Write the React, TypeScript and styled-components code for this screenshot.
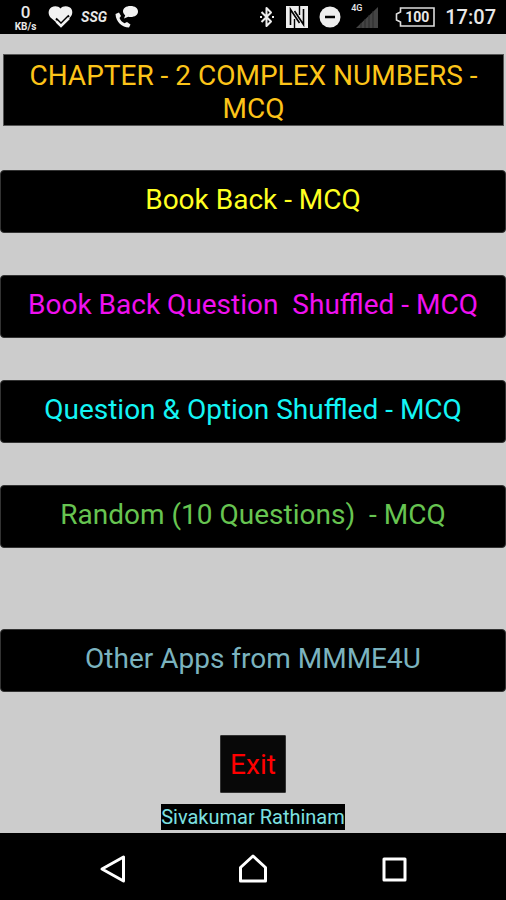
import React from "react";
import styled, { createGlobalStyle } from "styled-components";

const GlobalStyle = createGlobalStyle`
  *, *::before, *::after { box-sizing: border-box; }
  body {
    margin: 0;
    background: #cccccc;
    font-family: Roboto, "Liberation Sans", sans-serif;
  }
`;

const Screen = styled.div`
  display: flex;
  flex-direction: column;
  min-height: 100vh;
  background: #cccccc;
`;

const StatusBar = styled.header`
  display: flex;
  align-items: center;
  justify-content: space-between;
  height: 34px;
  padding: 0 10px 0 13px;
  background: #000;
  color: #e8e8e8;
`;

const StatusGroup = styled.div`
  display: flex;
  align-items: center;
  gap: 10px;

  svg { display: block; flex: none; }
`;

const Speed = styled.div`
  display: flex;
  flex-direction: column;
  align-items: center;
  width: 25px;
  font-weight: 500;
`;

const SpeedValue = styled.span`
  font-size: 17px;
  line-height: 20px;
`;

const SpeedUnit = styled.span`
  font-size: 10px;
  line-height: 10px;
  font-weight: 700;
`;

const Badge = styled.span`
  width: 22px;
  display: flex;
  justify-content: center;
  font-size: 14px;
  line-height: 16px;
  font-style: italic;
  font-weight: 700;
`;

const Signal = styled.div`
  position: relative;
  padding-left: 5px;
`;

const Network = styled.span`
  position: absolute;
  top: -4px;
  left: 0;
  font-size: 9px;
  line-height: 10px;
  font-weight: 500;
`;

const Battery = styled.div`
  display: grid;
  align-items: center;
  justify-items: center;
  width: 40px;
  height: 20px;
  margin-left: 7px;

  > * { grid-area: 1 / 1; }
`;

const Charge = styled.span`
  padding-left: 4px;
  font-size: 14px;
  line-height: 20px;
  font-weight: 700;
`;

const Clock = styled.time`
  font-size: 20px;
  line-height: 24px;
  font-weight: 500;
`;

const Content = styled.main`
  display: flex;
  flex: 1;
  flex-direction: column;
  align-items: center;
  padding: 20px 0 3px;
`;

const Title = styled.h1`
  align-self: stretch;
  margin: 0 2px 44px 3px;
  padding: 4px 8px 0;
  border: 1px solid #555;
  background: #000;
  color: #fcc419;
  font-size: 28px;
  line-height: 33px;
  font-weight: 400;
  text-align: center;
`;

const Menu = styled.nav`
  display: flex;
  flex-direction: column;
  align-self: stretch;
  gap: 42px;
  margin-bottom: 81px;
`;

const MenuButton = styled.button<{ $color: string }>`
  align-self: stretch;
  min-height: 63px;
  padding: 11px 8px 14px;
  border: 1px solid #333;
  border-radius: 4px;
  background: #000;
  color: ${(p) => p.$color};
  font-family: inherit;
  font-size: 28px;
  line-height: 36px;
  white-space: pre-wrap;
  cursor: pointer;
`;

const ExitButton = styled.button`
  margin: 43px 0 11px;
  padding: 11px 9px 9px;
  border: 1px solid #333;
  border-radius: 1px;
  background: #080808;
  color: #ff0000;
  font-family: inherit;
  font-size: 28px;
  line-height: 36px;
  cursor: pointer;
`;

const Author = styled.p`
  margin: 0;
  background: #000;
  color: #7de0e0;
  font-size: 20px;
  line-height: 26px;
`;

const SystemNav = styled.footer`
  display: flex;
  align-items: center;
  justify-content: space-between;
  height: 67px;
  padding: 4px 96px 0;
  background: #000;
`;

const NavButton = styled.button`
  display: flex;
  padding: 0;
  border: 0;
  background: none;
  color: #fff;
  cursor: pointer;
`;

const NavIcon = ({ d }: { d: string }) => (
  <svg width="32" height="32" viewBox="0 0 32 32" fill="none" stroke="currentColor" strokeWidth="3" strokeLinejoin="round" aria-hidden="true">
    <path d={d} />
  </svg>
);

const menuItems = [
  { label: "Book Back - MCQ", color: "#ffff22" },
  { label: "Book Back Question  Shuffled - MCQ", color: "#f010f0" },
  { label: "Question & Option Shuffled - MCQ", color: "#14f5f5" },
  { label: "Random (10 Questions)  - MCQ", color: "#67c451" },
];

export default function App() {
  return (
    <>
      <GlobalStyle />
      <Screen>
        <StatusBar>
          <StatusGroup>
            <Speed>
              <SpeedValue>0</SpeedValue>
              <SpeedUnit>KB/s</SpeedUnit>
            </Speed>
            <svg width="25" height="24" viewBox="0 0 25 24" aria-hidden="true">
              <path d="M12.500 21 2.500 12.500C-.5 9 .3 4 3.500 2.300 6.500.7 10.500 1 12.500 3.500 14.500 1 18.500.7 21.500 2.300 24.700 4 25.500 9 22 12.500Z" fill="#f2f2f2" />
              <path d="m8 13.500 5 5 8-8" fill="none" stroke="#000" strokeWidth="2" />
              <path d="m8.500 16.500 4.500 4.500 8-8" fill="none" stroke="#f2f2f2" strokeWidth="2.600" />
            </svg>
            <Badge>SSG</Badge>
            <svg width="24" height="24" viewBox="0 0 24 24" fill="#f2f2f2" aria-hidden="true">
              <path d="M15.500 1C20 1 23 3.200 23 6.500S20 12 15.500 12c-.8 0-1.500-.1-2.200-.3L9 13.500l1.200-3.300C9 9.200 8 8 8 6.500 8 3.200 11 1 15.500 1Z" />
              <path d="m.5 9 3.500-1.500L6 11l-1.500 2c1 2.500 2.800 4.200 5 5.200L12 17l3.500 2.500L14 22.500C7 22.500 1 17 .5 9Z" />
            </svg>
          </StatusGroup>
          <StatusGroup>
            <svg width="16" height="22" viewBox="0 0 16 22" fill="none" stroke="#eee" strokeWidth="2" strokeLinejoin="round" aria-hidden="true">
              <path d="m2.500 6 9.500 9.500L7.500 20V2L12 6.500 2.500 16" />
              <path d="M1 11h2M13 11h2" />
            </svg>
            <svg width="24" height="22" viewBox="0 0 24 22" aria-hidden="true">
              <path d="M1 0h22v22H1Z" fill="#eee" />
              <path d="M5.500 19V3.500L14.500 17" fill="none" stroke="#000" strokeWidth="1.600" />
              <path d="M9.500 5l9 13.500V3" fill="none" stroke="#000" strokeWidth="1.600" />
              <path d="M9.500 22v-9M14.500 9V0" stroke="#000" strokeWidth="1.400" />
            </svg>
            <svg width="22" height="22" viewBox="0 0 22 22" aria-hidden="true">
              <circle cx="11" cy="11" r="10.500" fill="#eee" />
              <path d="M6 11h10" stroke="#000" strokeWidth="2.500" />
            </svg>
            <Signal>
              <Network>4G</Network>
              <svg width="22" height="21" viewBox="0 0 22 21" aria-hidden="true">
                <path d="M22 0v21H0Z" fill="#444" />
                <path d="M5 16v5M9 12v9M13 8v13M17 4v17" stroke="#2a2a2a" strokeWidth="1" />
              </svg>
            </Signal>
            <Battery>
              <svg width="40" height="20" viewBox="0 0 40 20" fill="none" stroke="#ddd" strokeWidth="1.600" aria-hidden="true">
                <path d="M5.500 1H39v18H5.500v-4L1.500 13V7l4-2Z" />
              </svg>
              <Charge>100</Charge>
            </Battery>
            <Clock>17:07</Clock>
          </StatusGroup>
        </StatusBar>

        <Content>
          <Title>CHAPTER - 2 COMPLEX NUMBERS - MCQ</Title>
          <Menu>
            {menuItems.map((item) => (
              <MenuButton key={item.label} type="button" $color={item.color}>
                {item.label}
              </MenuButton>
            ))}
          </Menu>
          <MenuButton type="button" $color="#7bb3bf">Other Apps from MMME4U</MenuButton>
          <ExitButton type="button">Exit</ExitButton>
          <Author>Sivakumar Rathinam</Author>
        </Content>

        <SystemNav>
          <NavButton type="button" aria-label="Back">
            <NavIcon d="M27.500 4v24L6 16Z" />
          </NavButton>
          <NavButton type="button" aria-label="Home">
            <NavIcon d="M3.500 28V14.500L16 3l12.500 11.500V28Z" />
          </NavButton>
          <NavButton type="button" aria-label="Recent apps">
            <NavIcon d="M6 6h21v21H6Z" />
          </NavButton>
        </SystemNav>
      </Screen>
    </>
  );
}
